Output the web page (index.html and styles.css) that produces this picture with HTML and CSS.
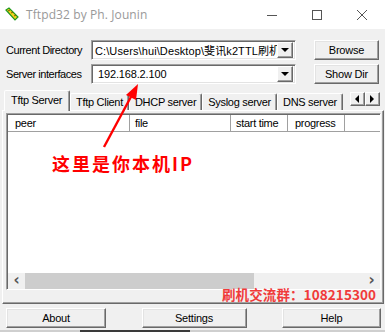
FILE: index.html
```html
<!DOCTYPE html>
<html lang="zh">
<head>
    <meta charset="UTF-8">
    <title>Tftpd32 by Ph. Jounin</title>
    <link rel="stylesheet" href="styles.css">
</head>
<body>
    <div class="window">
        <div class="titlebar">
            <svg class="app-icon" width="14" height="14" viewBox="0 0 14 14">
                <path d="M1 3 L4 1 L13 10 L10 13 Z" fill="#f2d21a" stroke="#1f9a1f" stroke-width="1.2"/>
                <path d="M3 4 L5 3 M6 6 L8 5 M9 9 L11 8" stroke="#7a5a00" stroke-width="1"/>
            </svg>
            <span class="title">Tftpd32 by Ph. Jounin</span>
            <div class="controls">
                <svg width="12" height="12" viewBox="0 0 12 12"><path d="M1 6.5 H11" stroke="#555" stroke-width="1"/></svg>
                <svg width="12" height="12" viewBox="0 0 12 12"><rect x="1.5" y="1.5" width="9" height="9" fill="none" stroke="#555" stroke-width="1"/></svg>
                <svg width="12" height="12" viewBox="0 0 12 12"><path d="M1 1 L11 11 M11 1 L1 11" stroke="#555" stroke-width="1"/></svg>
            </div>
        </div>

        <div class="client">
            <div class="row">
                <label class="lbl">Current Directory</label>
                <div class="combo">
                    <span class="combo-text">C:\Users\hui\Desktop\斐讯k2TTL刷机</span>
                    <span class="drop"><i class="tri-down"></i></span>
                </div>
                <button class="btn side-btn">Browse</button>
            </div>
            <div class="row">
                <label class="lbl">Server interfaces</label>
                <div class="combo">
                    <span class="combo-text edit">192.168.2.100</span>
                    <span class="drop"><i class="tri-down"></i></span>
                </div>
                <button class="btn side-btn">Show Dir</button>
            </div>

            <div class="tabs">
                <div class="tab active">Tftp Server</div>
                <div class="tab">Tftp Client</div>
                <div class="tab">DHCP server</div>
                <div class="tab">Syslog server</div>
                <div class="tab">DNS server</div>
                <div class="tab-arrows">
                    <span class="arrow-btn"><i class="tri-left"></i></span>
                    <span class="arrow-btn"><i class="tri-right"></i></span>
                </div>
            </div>

            <div class="panel">
                <div class="list">
                    <div class="list-head">
                        <div class="col col-peer">peer</div>
                        <div class="col col-file">file</div>
                        <div class="col col-start">start time</div>
                        <div class="col col-progress">progress</div>
                        <div class="col col-rest"></div>
                    </div>
                    <div class="list-body"></div>
                    <div class="hscroll">
                        <span class="sb-arrow">&#8249;</span>
                        <span class="sb-track"><span class="sb-thumb"></span></span>
                        <span class="sb-arrow">&#8250;</span>
                    </div>
                </div>
            </div>

            <div class="buttons">
                <button class="btn btn-about">About</button>
                <button class="btn btn-settings">Settings</button>
                <button class="btn btn-help">Help</button>
            </div>
            <div class="bottom-strip"><span class="dark-part"></span></div>
        </div>

        <!-- annotations drawn over the window -->
        <svg class="note-arrow" width="50" height="70" viewBox="0 0 50 70">
            <path d="M8 64 L37 10" stroke="#ff0000" stroke-width="2.4" fill="none"/>
            <path d="M42 1 L30 12 L40 17 Z" fill="#ff0000"/>
        </svg>
        <div class="note-ip">这里是你本机IP</div>
        <div class="note-group">刷机交流群：108215300</div>
    </div>
</body>
</html>
```

FILE: styles.css
```css
* {
    margin: 0;
    padding: 0;
    box-sizing: border-box;
}
body {
    width: 385px;
    height: 332px;
    overflow: hidden;
    background: #f0f0f0;
    font-family: "Liberation Sans", Arial, sans-serif;
    font-size: 11px;
    color: #000;
}
.window {
    position: relative;
    width: 385px;
    height: 332px;
}
.titlebar {
    height: 29px;
    background: #fff;
    display: flex;
    align-items: center;
    padding-left: 5px;
}
.app-icon {
    margin-right: 7px;
    margin-top: -2px;
}
.title {
    font-family: "Open Sans", "Noto Sans", sans-serif;
    font-size: 12px;
    color: #999;
    letter-spacing: 0.1px;
}
.controls {
    margin-left: auto;
    display: flex;
    gap: 33px;
    padding-right: 17px;
}
.client {
    padding-top: 11px;
}
.row {
    display: flex;
    align-items: center;
    height: 20px;
    margin-bottom: 4px;
    padding-left: 6px;
}
.lbl {
    width: 85px;
    letter-spacing: -0.45px;
}
.combo {
    width: 205px;
    height: 20px;
    background: #fff;
    border: 1px solid;
    border-color: #a0a0a0 #fff #fff #a0a0a0;
    box-shadow: inset 1px 1px #696969, inset -1px -1px #e3e3e3;
    display: flex;
    align-items: center;
    padding: 2px;
    overflow: hidden;
}
.combo-text {
    flex: 1;
    min-width: 0;
    white-space: nowrap;
    overflow: hidden;
    padding-left: 1px;
    letter-spacing: 0.1px;
    font-family: "Liberation Sans", "Noto Sans CJK SC", sans-serif;
}
.combo-text.edit {
    padding-left: 4px;
    letter-spacing: -0.15px;
}
.drop {
    width: 16px;
    height: 16px;
    flex: none;
    background: #f0f0f0;
    border: 1px solid;
    border-color: #fff #696969 #696969 #fff;
    box-shadow: inset -1px -1px #a0a0a0;
    display: flex;
    align-items: center;
    justify-content: center;
}
.tri-down {
    width: 0;
    height: 0;
    border-left: 4px solid transparent;
    border-right: 4px solid transparent;
    border-top: 4px solid #000;
}
.tri-left {
    width: 0;
    height: 0;
    border-top: 4px solid transparent;
    border-bottom: 4px solid transparent;
    border-right: 4px solid #000;
}
.tri-right {
    width: 0;
    height: 0;
    border-top: 4px solid transparent;
    border-bottom: 4px solid transparent;
    border-left: 4px solid #000;
}
.btn {
    font-family: "Liberation Sans", Arial, sans-serif;
    font-size: 11px;
    letter-spacing: -0.2px;
    color: #000;
    background: #f0f0f0;
    border: 1px solid;
    border-color: #fff #696969 #696969 #fff;
    box-shadow: inset -1px -1px #a0a0a0, inset 1px 1px #e3e3e3;
    height: 20px;
}
.side-btn {
    width: 65px;
    margin-left: 18px;
}
.tabs {
    display: flex;
    align-items: flex-end;
    height: 24px;
    margin-top: -2px;
    padding-left: 4px;
}
.tab {
    height: 17px;
    padding: 0 5px;
    border: 1px solid;
    border-bottom: none;
    border-color: #fff #696969 transparent #fff;
    border-radius: 2px 2px 0 0;
    box-shadow: inset -1px 0 #a0a0a0;
    display: flex;
    align-items: center;
    letter-spacing: -0.3px;
    white-space: nowrap;
}
.tab.active {
    padding: 0 7px 2px 6px;
    background: #f0f0f0;
    position: relative;
    z-index: 1;
    margin-bottom: -1px;
    height: 21px;
}
.tab-arrows {
    display: flex;
    margin-left: 7px;
    margin-bottom: 4px;
}
.arrow-btn {
    width: 15px;
    height: 14px;
    background: #f0f0f0;
    border: 1px solid;
    border-color: #fff #696969 #696969 #fff;
    box-shadow: inset -1px -1px #a0a0a0;
    display: flex;
    align-items: center;
    justify-content: center;
}
.panel {
    margin-left: 2px;
    width: 382px;
    height: 194px;
    border: 1px solid;
    border-color: #fff #696969 #696969 #fff;
    box-shadow: inset -1px -1px #a0a0a0;
    padding: 2px 0 0 3px;
}
.list {
    width: 375px;
    height: 177px;
    background: #fff;
    border: 1px solid;
    border-color: #a0a0a0 #fff #fff #a0a0a0;
    box-shadow: inset 1px 1px #696969;
    padding: 1px 0 0 1px;
    display: flex;
    flex-direction: column;
}
.list-head {
    display: flex;
    height: 17px;
    flex: none;
}
.col {
    height: 17px;
    background: #fff;
    border-right: 1px solid #a0a0a0;
    border-bottom: 1px solid #a0a0a0;
    display: flex;
    align-items: center;
    padding-left: 6px;
    letter-spacing: -0.3px;
}
.col-peer { width: 122px; padding-left: 7px; }
.col-file { width: 101px; padding-left: 5px; }
.col-start { width: 57px; padding-left: 5px; }
.col-progress { width: 57px; padding-left: 7px; }
.col-rest { flex: 1; border-right: none; }
.list-body {
    flex: 1;
}
.hscroll {
    height: 16px;
    flex: none;
    display: flex;
    background: #f0f0f0;
}
.sb-arrow {
    width: 17px;
    font-family: "DejaVu Sans", sans-serif;
    font-size: 15px;
    font-weight: bold;
    color: #555;
    line-height: 14px;
    text-align: center;
}
.sb-track {
    flex: 1;
    display: flex;
}
.sb-thumb {
    width: 229px;
    background: #cdcdcd;
}
.buttons {
    display: flex;
    justify-content: space-between;
    padding: 4px 4px 0 6px;
}
.btn-about { width: 100px; }
.btn-settings { width: 105px; }
.btn-help { width: 99px; }
.bottom-strip {
    margin-top: 2px;
    height: 3px;
    background: #cfcfcf;
}
.dark-part {
    display: block;
    margin-left: 80px;
    width: 110px;
    height: 3px;
    background: #3a3a3a;
}
.note-arrow {
    position: absolute;
    left: 96px;
    top: 83px;
}
.note-ip {
    position: absolute;
    left: 52px;
    top: 150px;
    font-family: "Noto Sans CJK SC", sans-serif;
    font-size: 18px;
    font-weight: bold;
    color: #ff0000;
    letter-spacing: 2px;
}
.note-group {
    position: absolute;
    left: 222px;
    top: 287px;
    line-height: 14px;
    font-family: "Noto Sans CJK SC", sans-serif;
    font-size: 13.5px;
    font-weight: bold;
    color: #f03a3a;
    letter-spacing: 0.1px;
}
```
